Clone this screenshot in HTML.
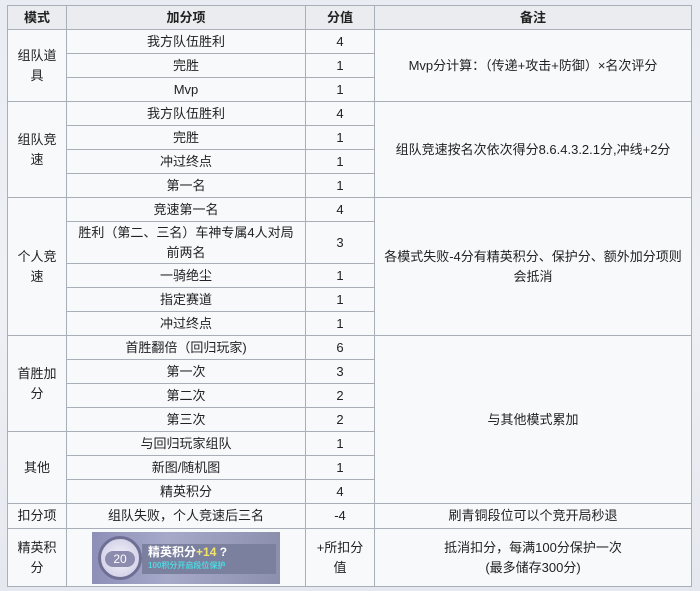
<!DOCTYPE html>
<html><head><meta charset="utf-8"><style>
html,body{margin:0;padding:0;}
body{width:700px;height:591px;overflow:hidden;background:linear-gradient(180deg,#e9ecf3 0%,#eef0f5 50%,#e6e8ef 100%);font-family:"Liberation Sans","Noto Sans CJK SC",sans-serif;font-size:13px;color:#222;position:relative}
table{position:absolute;left:7px;top:5px;border-collapse:collapse;table-layout:fixed;width:684px}
td,th{border:1px solid #a9afb8;background:#f8f9fa;text-align:center;padding:0 4px;line-height:20px;box-sizing:border-box}
th{background:#eaecf0;font-weight:bold;height:24px}
td{height:24px}
.img{position:relative;width:188px;height:52px;margin:0 auto;background:linear-gradient(90deg,#8d8fb8,#a7a9c9 40%,#8c90ad);overflow:hidden}
.ring{position:absolute;left:6px;top:4px;width:44px;height:44px;border-radius:50%;border:3px solid #6f6f96;background:radial-gradient(#f4f4fb,#c9c8e2);box-sizing:border-box}
.ring span{position:absolute;left:4px;top:12px;width:30px;height:16px;background:#8b8cae;border-radius:8px;color:#fff;font-size:12px;line-height:16px}
.bar{position:absolute;left:50px;top:12px;width:134px;height:30px;background:#7b809e}
.t1{position:absolute;left:56px;top:12px;color:#fff;font-weight:bold;font-size:12px;line-height:16px;white-space:nowrap}
.t1 b{color:#f3e36a}
.t2{position:absolute;left:56px;top:29px;color:#4fd6e0;font-size:8px;line-height:10px;white-space:nowrap;font-weight:bold}
</style></head><body>
<table>
<colgroup><col style="width:59px"><col style="width:239px"><col style="width:69px"><col style="width:317px"></colgroup>
<tr><th>模式</th><th>加分项</th><th>分值</th><th>备注</th></tr>
<tr><td rowspan="3">组队道<br>具</td><td>我方队伍胜利</td><td>4</td><td rowspan="3">Mvp分计算：（传递+攻击+防御）×名次评分</td></tr>
<tr><td>完胜</td><td>1</td></tr>
<tr><td>Mvp</td><td>1</td></tr>
<tr><td rowspan="4">组队竞<br>速</td><td>我方队伍胜利</td><td>4</td><td rowspan="4">组队竞速按名次依次得分8.6.4.3.2.1分,冲线+2分</td></tr>
<tr><td>完胜</td><td>1</td></tr>
<tr><td>冲过终点</td><td>1</td></tr>
<tr><td>第一名</td><td>1</td></tr>
<tr><td rowspan="5">个人竞<br>速</td><td>竞速第一名</td><td>4</td><td rowspan="5">各模式失败-4分有精英积分、保护分、额外加分项则<br>会抵消</td></tr>
<tr><td style="height:42px">胜利（第二、三名）车神专属4人对局<br>前两名</td><td>3</td></tr>
<tr><td>一骑绝尘</td><td>1</td></tr>
<tr><td>指定赛道</td><td>1</td></tr>
<tr><td>冲过终点</td><td>1</td></tr>
<tr><td rowspan="4">首胜加<br>分</td><td>首胜翻倍（回归玩家)</td><td>6</td><td rowspan="7">与其他模式累加</td></tr>
<tr><td>第一次</td><td>3</td></tr>
<tr><td>第二次</td><td>2</td></tr>
<tr><td>第三次</td><td>2</td></tr>
<tr><td rowspan="3">其他</td><td>与回归玩家组队</td><td>1</td></tr>
<tr><td>新图/随机图</td><td>1</td></tr>
<tr><td>精英积分</td><td>4</td></tr>
<tr><td style="height:25px">扣分项</td><td>组队失败，个人竞速后三名</td><td>-4</td><td>刷青铜段位可以个竞开局秒退</td></tr>
<tr><td style="height:58px">精英积<br>分</td><td style="padding:0"><div class="img"><div class="bar"></div><div class="ring"><span>20</span></div><div class="t1">精英积分<b>+14</b> ?</div><div class="t2">100积分开启段位保护</div></div></td><td>+所扣分<br>值</td><td>抵消扣分，每满100分保护一次<br>(最多储存300分)</td></tr>
</table>
</body></html>
